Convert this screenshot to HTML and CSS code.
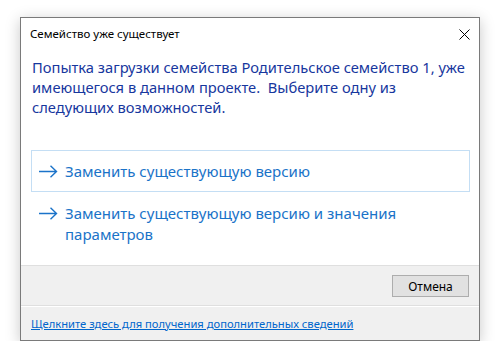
FILE: index.html
```html
<!DOCTYPE html>
<html lang="ru">
<head>
    <meta charset="UTF-8">
    <title>Семейство уже существует</title>
    <link rel="stylesheet" href="styles.css">
</head>
<body>
    <div class="window">
        <div class="titlebar">
            <span class="title">Семейство уже существует</span>
            <svg class="close" width="11" height="11" viewBox="0 0 11 11">
                <path d="M0.5 0.5 L10.5 10.5 M10.5 0.5 L0.5 10.5" stroke="#000" stroke-width="1" fill="none"/>
            </svg>
        </div>

        <div class="content">
            <p class="instruction">Попытка загрузки семейства Родительское семейство 1, уже имеющегося в данном проекте.&nbsp; Выберите одну из следующих возможностей.</p>

            <div class="cmd-link hover">
                <svg class="arrow" width="19" height="13" viewBox="0 0 19 13">
                    <path d="M0 6.5 H17.5 M11.5 0.8 L17.5 6.5 L11.5 12.2" stroke="#1b73c9" stroke-width="1.4" fill="none"/>
                </svg>
                <span>Заменить существующую версию</span>
            </div>
            <div class="cmd-link">
                <svg class="arrow" width="19" height="13" viewBox="0 0 19 13">
                    <path d="M0 6.5 H17.5 M11.5 0.8 L17.5 6.5 L11.5 12.2" stroke="#1b73c9" stroke-width="1.4" fill="none"/>
                </svg>
                <span>Заменить существующую версию и значения параметров</span>
            </div>
        </div>

        <div class="buttons">
            <button>Отмена</button>
        </div>

        <div class="footer">
            <a href="#">Щелкните здесь для получения дополнительных сведений</a>
        </div>
    </div>
</body>
</html>
```

FILE: styles.css
```css
body {
    margin: 0;
    background: #fff;
    font-family: "Noto Sans", "Open Sans", sans-serif;
}
.window {
    box-sizing: border-box;
    width: 460px;
    height: 324px;
    margin: 17px 0 0 20px;
    border: 1px solid #7a7a7a;
    background: #fff;
    box-shadow: 0 3px 14px rgba(0,0,0,0.22);
    display: flex;
    flex-direction: column;
}
.titlebar {
    height: 31px;
    display: flex;
    align-items: center;
    justify-content: space-between;
    padding: 0 9px 0 9px;
}
.title {
    font-size: 11.5px;
    color: #000;
}
.close {
    margin-top: 1px;
}
.content {
    flex: 1;
    padding: 0 9px 0 10px;
}
.instruction {
    margin: 8px 0 33px 1px;
    font-size: 14.7px;
    line-height: 20px;
    color: #17379e;
}
.cmd-link {
    display: flex;
    align-items: flex-start;
    gap: 7px;
    padding: 10px 10px 9px 7px;
    border: 1px solid transparent;
    font-size: 15px;
    line-height: 21px;
    color: #1a73c8;
}
.cmd-link.hover {
    border-color: #c4def4;
}
.arrow {
    flex: none;
    margin-top: 4px;
}
.buttons {
    height: 40px;
    border-top: 1px solid #dfdfdf;
    background: #f0f0f0;
    display: flex;
    justify-content: flex-end;
    align-items: flex-start;
    padding: 9px 10px 0 0;
    box-sizing: border-box;
}
button {
    width: 77px;
    height: 22px;
    border: 1px solid #adadad;
    background: #e1e1e1;
    font-family: "Noto Sans", sans-serif;
    font-size: 12px;
    color: #000;
    padding: 0;
}
.footer {
    height: 34px;
    border-top: 1px solid #dfdfdf;
    box-shadow: inset 0 1px #fff;
    background: #f0f0f0;
    padding: 0 10px;
    display: flex;
    align-items: center;
}
.footer a {
    font-size: 11.2px;
    color: #0066cc;
}
```
